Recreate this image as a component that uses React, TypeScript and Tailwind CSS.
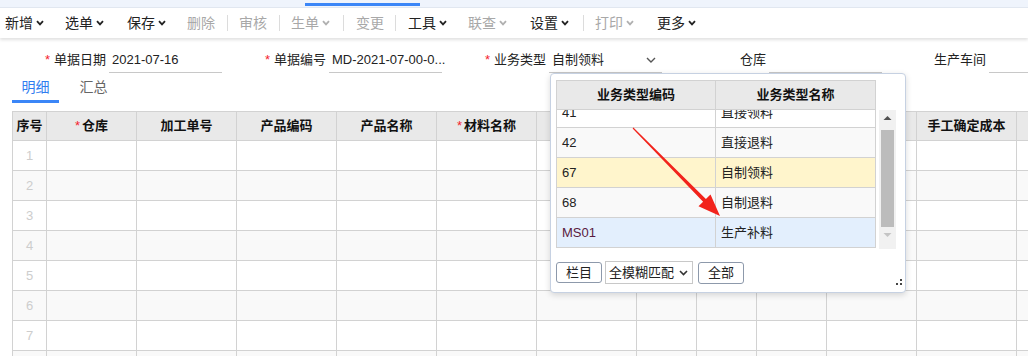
import React from "react";

const FONT = "font-['Liberation_Sans','Noto_Sans_CJK_SC',sans-serif]";

const Chevron = ({ color = "#333" }: { color?: string }) => (
  <svg width="8" height="6" viewBox="0 0 8 6" className="ml-[3px]">
    <path d="M1 1.2 L4 4.4 L7 1.2" fill="none" stroke={color} strokeWidth="1.8" />
  </svg>
);

type ToolItem = { label?: string; sep?: boolean; drop?: boolean; gray?: boolean; ml: string };

const toolItems: ToolItem[] = [
  { label: "新增", drop: true, ml: "ml-[5px]" },
  { label: "选单", drop: true, ml: "ml-[21px]" },
  { label: "保存", drop: true, ml: "ml-[23px]" },
  { label: "删除", gray: true, ml: "ml-[21px]" },
  { sep: true, ml: "ml-[12px]" },
  { label: "审核", gray: true, ml: "ml-[11px]" },
  { sep: true, ml: "ml-[12px]" },
  { label: "生单", drop: true, gray: true, ml: "ml-[11px]" },
  { sep: true, ml: "ml-[13px]" },
  { label: "变更", gray: true, ml: "ml-[12px]" },
  { sep: true, ml: "ml-[11px]" },
  { label: "工具", drop: true, ml: "ml-[12px]" },
  { label: "联查", drop: true, gray: true, ml: "ml-[21px]" },
  { label: "设置", drop: true, ml: "ml-[23px]" },
  { sep: true, ml: "ml-[14px]" },
  { label: "打印", drop: true, gray: true, ml: "ml-[11px]" },
  { label: "更多", drop: true, ml: "ml-[23px]" },
];

const Field = ({ label, value, required, select }: { label: string; value?: string; required?: boolean; select?: boolean }) => (
  <div className="flex h-[26px] w-[220px] shrink-0 items-center">
    <div className="w-[106px] shrink-0 text-right text-[13px] text-[#222]">
      {required && <span className="mr-[4px] text-[#f5222d]">*</span>}
      {label}
    </div>
    <div className="ml-[3px] flex h-[26px] w-[113px] shrink-0 items-center justify-between border-b border-[#c8c8c8] pl-[3px] pr-[6px] text-[13px] text-[#222]">
      <span className="whitespace-nowrap">{value}</span>
      {select && (
        <svg width="10" height="6" viewBox="0 0 10 6">
          <path d="M1 1 L5 5 L9 1" fill="none" stroke="#555" strokeWidth="1.4" />
        </svg>
      )}
    </div>
  </div>
);

const columns = [
  { w: "w-[34px]", t: "序号" },
  { w: "w-[90px]", t: "仓库", req: true },
  { w: "w-[100px]", t: "加工单号" },
  { w: "w-[100px]", t: "产品编码" },
  { w: "w-[100px]", t: "产品名称" },
  { w: "w-[100px]", t: "材料名称", req: true },
  { w: "w-[100px]", t: "规格型号" },
  { w: "w-[60px]", t: "单位" },
  { w: "w-[60px]", t: "数量" },
  { w: "w-[70px]", t: "单价" },
  { w: "w-[90px]", t: "金额" },
  { w: "w-[100px]", t: "手工确定成本" },
  { w: "w-[100px]", t: "" },
];

const types = [
  { code: "41", name: "直接领料", bg: "bg-white" },
  { code: "42", name: "直接退料", bg: "bg-[#f9f9f9]" },
  { code: "67", name: "自制领料", bg: "bg-[#fff5cc]" },
  { code: "68", name: "自制退料", bg: "bg-[#f9f9f9]" },
  { code: "MS01", name: "生产补料", bg: "bg-[#e3effd]", sel: true },
];

export default function App() {
  return (
    <div className={`relative h-[356px] w-[1028px] overflow-hidden bg-white ${FONT}`}>
      {/* top tab strip */}
      <div className="h-[8px] border-b border-[#e2e8f1] bg-[#eff4fc] pt-[3px]">
        <div className="ml-[305px] h-[3px] w-[115px] bg-[#3b86f7]" />
      </div>

      {/* toolbar */}
      <div className="relative z-10 flex h-[30px] items-center bg-white text-[14px] shadow-[0_2px_3px_rgba(0,0,0,0.12)]">
        {toolItems.map((it, i) =>
          it.sep ? (
            <div key={i} className={`h-[16px] w-px bg-[#dcdcdc] ${it.ml}`} />
          ) : (
            <div key={i} className={`flex items-center whitespace-nowrap ${it.ml} ${it.gray ? "text-[#a8a8a8]" : "text-[#222]"}`}>
              {it.label}
              {it.drop && <Chevron color={it.gray ? "#b0b0b0" : "#222"} />}
            </div>
          )
        )}
      </div>

      {/* form row */}
      <div className="mt-[9px] flex">
        <Field label="单据日期" value="2021-07-16" required />
        <Field label="单据编号" value="MD-2021-07-00-0..." required />
        <Field label="业务类型" value="自制领料" required select />
        <Field label="仓库" />
        <Field label="生产车间" />
      </div>

      {/* tabs */}
      <div className="flex pl-[12px] pt-[4px] text-[14px]">
        <div className="flex w-[47px] flex-col items-center">
          <div className="h-[20px] leading-[20px] text-[#2f7df0]">明细</div>
          <div className="mt-[3px] h-[3px] w-[47px] bg-[#3b86f7]" />
        </div>
        <div className="ml-[11px] flex w-[47px] flex-col items-center">
          <div className="h-[20px] leading-[20px] text-[#666]">汇总</div>
        </div>
      </div>

      {/* grid */}
      <table className="ml-[12px] mt-[8px] w-[1104px] table-fixed border-collapse text-[13px]">
        <colgroup>
          {columns.map((c, i) => (
            <col key={i} className={c.w} />
          ))}
        </colgroup>
        <thead>
          <tr className="h-[29px] bg-[#e9e9e9]">
            {columns.map((c, i) => (
              <th key={i} className="whitespace-nowrap border border-[#d2d2d2] p-0 text-center font-bold text-[#111]">
                {c.req && <span className="mr-[2px] font-normal text-[#f5222d]">*</span>}
                {c.t}
              </th>
            ))}
          </tr>
        </thead>
        <tbody>
          {[1, 2, 3, 4, 5, 6, 7, 8].map((n) => (
            <tr key={n} className={`h-[30px] ${n % 2 === 0 ? "bg-[#f9f9f9]" : "bg-white"}`}>
              {columns.map((_, i) => (
                <td key={i} className="border border-[#d2d2d2] p-0 text-center text-[#cdcdcd]">
                  {i === 0 ? n : ""}
                </td>
              ))}
            </tr>
          ))}
        </tbody>
      </table>

      {/* business type dropdown */}
      <div className="absolute left-[550px] top-[73px] z-20 h-[220px] w-[356px] rounded-[4px] border border-[#c6d1e2] bg-white pl-[5px] pt-[6px] shadow-[0_2px_6px_rgba(0,0,0,0.15)]">
        <div className="flex">
          <div className="w-[320px] text-[13px]">
            <div className="flex h-[30px] border border-[#d2d2d2] bg-[#e9e9e9] font-bold text-[#111]">
              <div className="flex w-[159px] items-center justify-center border-r border-[#d2d2d2]">业务类型编码</div>
              <div className="flex flex-1 items-center justify-center">业务类型名称</div>
            </div>
            <div className="h-[138px] overflow-hidden border-x border-[#d2d2d2]">
              <div className="-mt-[12px]">
                {types.map((t) => (
                  <div key={t.code} className={`flex h-[30px] border-b border-[#d2d2d2] ${t.bg}`}>
                    <div className={`flex w-[159px] items-center border-r border-[#d2d2d2] pl-[5px] ${t.sel ? "text-[#5a1a3e]" : "text-[#222]"}`}>
                      {t.code}
                    </div>
                    <div className="flex flex-1 items-center pl-[5px] text-[#222]">{t.name}</div>
                  </div>
                ))}
              </div>
            </div>
          </div>
          <div className="ml-[3px] mt-[30px] flex h-[139px] w-[17px] flex-col items-center bg-[#f1f1f1]">
            <svg width="9" height="6" viewBox="0 0 9 6" className="mt-[5px]">
              <path d="M0.5 5 L4.5 1 L8.5 5 Z" fill="#505050" />
            </svg>
            <div className="mt-[9px] h-[97px] w-[13px] bg-[#bcbcbc]" />
            <svg width="9" height="6" viewBox="0 0 9 6" className="mt-[5px]">
              <path d="M0.5 1 L4.5 5 L8.5 1 Z" fill="#c4c4c4" />
            </svg>
          </div>
        </div>

        <div className="mt-[12px] flex items-center text-[13px] text-[#222]">
          <button className="flex h-[21px] w-[46px] items-center justify-center rounded-[3px] border border-[#8d99ab] bg-white">栏目</button>
          <div className="ml-[3px] flex h-[23px] w-[88px] items-center border border-[#c8c8c8] pl-[3px]">
            <span className="whitespace-nowrap">全模糊匹配</span>
            <svg width="9" height="6" viewBox="0 0 9 6" className="ml-[5px]">
              <path d="M1 1 L4.5 4.5 L8 1" fill="none" stroke="#333" strokeWidth="1.6" />
            </svg>
          </div>
          <button className="ml-[5px] flex h-[22px] w-[46px] items-center justify-center rounded-[3px] border border-[#8d99ab] bg-white">全部</button>
        </div>

        <svg width="6" height="6" viewBox="0 0 6 6" className="absolute bottom-[7px] right-[3px]">
          <rect x="4" y="0" width="2" height="2" fill="#444" />
          <rect x="0" y="4" width="2" height="2" fill="#444" />
          <rect x="4" y="4" width="2" height="2" fill="#444" />
        </svg>
      </div>

      {/* red annotation arrow */}
      <svg width="1028" height="356" className="pointer-events-none absolute left-0 top-0 z-30">
        <polygon
          points="633.4,127.6 705.9,199.0 710.5,194.5 720,216 698.5,206.3 703.1,201.8 632.6,128.4"
          fill="#f2231b"
        />
      </svg>
    </div>
  );
}
